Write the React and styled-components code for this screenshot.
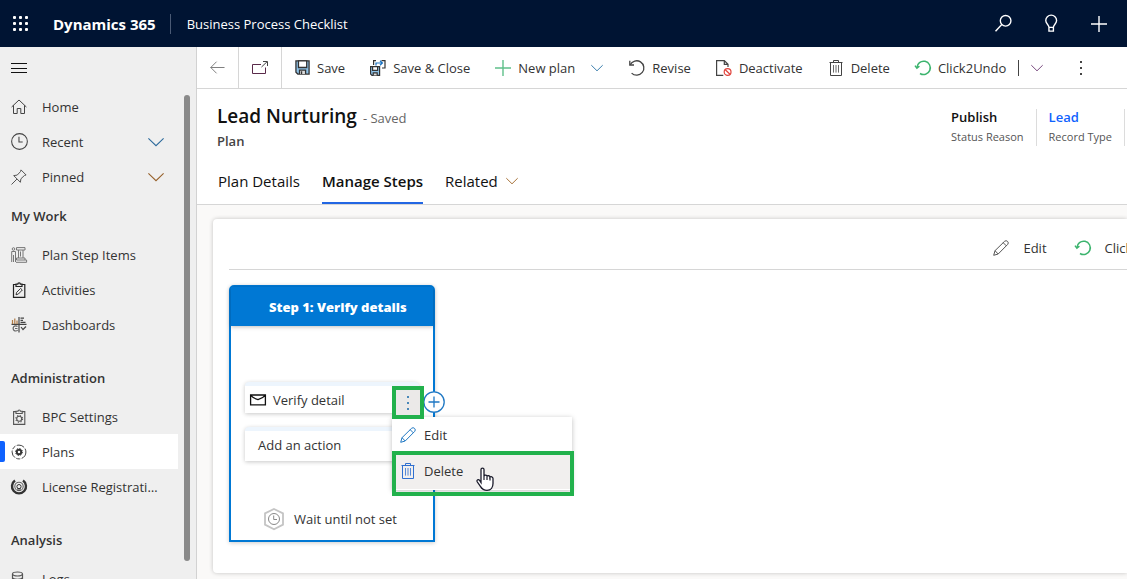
import React from "react";
import styled, { createGlobalStyle } from "styled-components";

const GlobalStyle = createGlobalStyle`
  *, *::before, *::after { box-sizing: border-box; }
  body {
    margin: 0;
    overflow: hidden;
    font-family: "Open Sans", "Noto Sans", sans-serif;
    font-size: 13px;
    line-height: 20px;
    color: #333;
    background: #faf9f8;
  }
  button { font: inherit; color: inherit; background: none; border: 0; padding: 0; cursor: pointer; }
  a { color: inherit; text-decoration: none; }
  h1, h2, p, ul, dl, dd, dt { margin: 0; padding: 0; font: inherit; }
  ul { list-style: none; }
`;

/* ---------- icons ---------- */

const Svg = styled.svg`
  display: block;
  flex: none;
  fill: none;
  overflow: visible;
`;

const Icon = ({ size = 16, color = "#333", children, box = 16, weight = 1 }) => (
  <Svg width={size} height={size} viewBox={`0 0 ${box} ${box}`} stroke={color} strokeWidth={weight} aria-hidden="true">
    {children}
  </Svg>
);

const WaffleIcon = () => (
  <Icon color="none">
    {[0, 6, 12].map((y) =>
      [0, 6, 12].map((x) => <rect key={`${x}-${y}`} x={x} y={y} width="3" height="3" rx="1" fill="#fff" />)
    )}
  </Icon>
);
const SearchIcon = () => (
  <Icon size={17} color="#fff" weight="1.3">
    <circle cx="10" cy="5.5" r="5" />
    <path d="M6.4 9 L0.5 15.3" />
  </Icon>
);
const BulbIcon = () => (
  <Icon size={17} color="#fff" weight="1.3">
    <path d="M5.6 11.6 C5.6 9 2.6 8.2 2.6 5.2 a5.1 5.1 0 0 1 10.2 0 C12.8 8.2 9.8 9 9.8 11.6 Z M5.6 11.6 V15.2 H9.8 V11.6" />
  </Icon>
);
const PlusIcon = ({ color = "#fff", weight = 1.4 }) => (
  <Icon color={color} weight={weight}>
    <path d="M8 0 V16 M0 8 H16" />
  </Icon>
);
const MenuIcon = () => (
  <Icon color="#111">
    <path d="M0 3.5 H16 M0 8.5 H16 M0 12.5 H16" />
  </Icon>
);
const BackIcon = () => (
  <Icon size={15} color="#777">
    <path d="M0.7 8 H15.5 M7 1.8 L0.8 8 L7 14.2" />
  </Icon>
);
const PopoutIcon = () => (
  <Icon color="#444">
    <path d="M9.5 7 L15 1.8 M11 1.5 H15.5 V6" />
    <path d="M9 4.5 H0.5 V13.5 H13.5 V7.5" stroke="#5a2a4a" />
  </Icon>
);
const SaveIcon = () => (
  <Icon size={15} color="#333" weight="1.4">
    <path d="M1 1 H15 V15 H3 L1 13 Z" fill="#8fc4ea" />
    <path d="M3.7 1 H12.5 V8 H3.7 Z" fill="#fff" />
    <path d="M4.8 15 V10.7 H11.3 V15" fill="#ddd" />
    <path d="M7 12 V15" />
  </Icon>
);
const SaveCloseIcon = () => (
  <Icon color="#333" weight="1.2">
    <path d="M0.6 6.6 H9.6 V15.4 H2 L0.6 14 Z" fill="#8fc4ea" />
    <path d="M2.6 6.6 H7.6 V10.4 H2.6 Z" fill="#fff" />
    <path d="M3.2 15.4 V12.8 H7.2 V15.4" fill="#ddd" />
    <path d="M3.6 5 V0.6 H6 M11.5 0.6 H15 V8 H12" />
    <path d="M6 5.6 V3 H12 M10 0.8 L12.4 3 L10 5.2" stroke="#1670c0" />
  </Icon>
);
const ChevronIcon = ({ size = 12, color = "#777" }) => (
  <Icon size={size} color={color} box={12} weight={size > 14 ? 0.8 : 1}>
    <path d="M0.3 3.2 L6 8.8 L11.7 3.2" />
  </Icon>
);
const UndoIcon = () => (
  <Icon color="#444" weight="1.3">
    <path d="M1.2 4.8 A7.2 7.2 0 1 1 2.6 13.1" />
    <path d="M0.8 0.8 V5 H5" />
  </Icon>
);
const GreenUndoIcon = () => (
  <Icon color="#3cb46e" weight="1.5">
    <path d="M1.9 7.6 A6.7 6.7 0 1 1 5 13.5" />
    <path d="M0 5.6 L1.9 8.2 L4.4 6.2" />
  </Icon>
);
const DeactivateIcon = () => (
  <Icon color="#444" weight="1.2">
    <path d="M7.3 15.4 H0.6 V0.6 H8.3 L12 4.3 V7 M8.3 0.6 V4.4 H12" />
    <circle cx="11.6" cy="12" r="3.4" stroke="#e0433c" />
    <path d="M9.3 9.7 L14 14.3" stroke="#e0433c" />
  </Icon>
);
const TrashIcon = ({ color = "#444" }) => (
  <Icon color={color}>
    <path d="M1.5 2.5 H14.5 M5.5 2.5 V0.5 H10.5 V2.5 M2.5 2.5 V15.5 H13.5 V2.5" />
    <path d="M5.5 5 V12.6 M8 5 V12.6 M10.5 5 V12.6" strokeWidth="0.8" />
  </Icon>
);
const PencilIcon = ({ color = "#555", size = 16 }) => (
  <Icon color={color} size={size}>
    <path d="M0.7 15.3 L2 10.7 L11.6 1.3 a2.2 2.2 0 0 1 3.1 3.1 L5.2 14 Z M2 10.7 L5.2 14 M10.2 2.7 L13.3 5.8" />
  </Icon>
);
const DotsIcon = ({ color = "#444" }) => (
  <Icon color="none">
    {[1, 7, 13].map((y) => (
      <rect key={y} x="7" y={y} width="2" height="2" fill={color} />
    ))}
  </Icon>
);
const HomeIcon = () => (
  <Icon color="#444">
    <path d="M0.6 8 L8 1 L15.4 8 M2.5 6.3 V14.5 H6.2 V9.5 H9.8 V14.5 H13.5 V6.3" />
  </Icon>
);
const ClockIcon = () => (
  <Icon size={17} color="#444">
    <circle cx="8" cy="8" r="7.4" />
    <path d="M7.5 3.5 V8.5 H11" />
  </Icon>
);
const PinIcon = () => (
  <Icon color="#555">
    <path d="M10 0.9 L15.1 6 L13.4 6.5 L9.9 9.8 L9.4 13.3 L2.7 6.6 L6.2 6.1 L9.5 2.6 Z M6 10 L0.5 15.5" />
  </Icon>
);
const StepItemsIcon = () => (
  <Icon color="#777">
    <circle cx="2.5" cy="2" r="1.3" />
    <path d="M0.7 8 V4.5 H4.5 V15 M2.5 8 V15 M0.7 8 V15 M5.5 0.6 H14 V3 H5.5 Z M7.5 3 V11 M12 3 V11 M9.5 4.5 V9.5 M5.5 11 H14 V13 H5.5 Z M5 15.3 H15.6 V13 H14" />
  </Icon>
);
const ActivitiesIcon = () => (
  <Icon color="#222" weight="1.2">
    <path d="M5 2.5 H2.5 V15.4 H13.8 V2.5 H11 M5 4.5 V2.2 H6.8 a1.3 1.3 0 0 1 2.6 0 H11 V4.5 Z" />
    <path d="M5 12.8 L5.6 10.4 L9.6 6.4 L11.3 8 L7.4 12 Z" strokeWidth="0.9" />
  </Icon>
);
const DashboardsIcon = () => (
  <Icon color="#444" weight="1.2">
    <path d="M0.5 7.4 H15.5 M8 0 V15.5" />
    <path d="M1.5 7 V3 M3.8 7 V1.5 M6 7 V3.5" stroke="#b07a44" />
    <path d="M9.5 1.2 H13 M9.5 3.3 H12 M9.5 5.4 H14.5 M10 10 L12 12.5 L15 9.5" />
    <path d="M6.5 9.5 A2.6 2.6 0 1 0 6.8 13 M4 11.5 H6.5" stroke="#666" />
  </Icon>
);
const BpcIcon = () => (
  <Icon color="#555" weight="1.1">
    <path d="M5 2.6 H2.6 V15.4 H13.8 V2.6 H11.2 M5 4.5 V2.2 H7 a1.2 1.2 0 0 1 2.4 0 H11.2 V4.5 Z" />
    <circle cx="8.2" cy="9.8" r="2.5" />
    <circle cx="8.2" cy="9.8" r="3.4" strokeDasharray="1.2 1.5" />
  </Icon>
);
const PlansIcon = () => (
  <Icon color="#444">
    <circle cx="8" cy="8" r="6.9" strokeDasharray="8 1.5 4 1.5" />
    <circle cx="8" cy="8" r="2.2" stroke="#333" strokeWidth="1.9" />
    <circle cx="8" cy="8" r="3.5" stroke="#333" strokeDasharray="1.3 1.45" />
  </Icon>
);
const LicenseIcon = () => (
  <Icon color="#333">
    <path d="M4 1.6 A7 7 0 1 0 12 1.6" strokeWidth="2.4" />
    <circle cx="8" cy="7.4" r="4.2" stroke="#666" strokeWidth="1.1" />
    <circle cx="8" cy="7.6" r="2.1" />
    <path d="M7 9 V11.6 M9 9 V11.6" />
  </Icon>
);
const LogsIcon = () => (
  <Icon color="#555" weight="1.2">
    <ellipse cx="6.5" cy="3" rx="5" ry="2" />
    <path d="M1.5 3 V13 C1.5 16 11.5 16 11.5 13 V3 M1.5 6.3 C1.5 9 11.5 9 11.5 6.3 M1.5 9.6 C1.5 12.3 11.5 12.3 11.5 9.6" />
  </Icon>
);
const MailIcon = () => (
  <Icon color="#111" weight="1.3">
    <path d="M0.6 3 H15.4 V12.9 H0.6 Z M0.8 3.3 Q3 6 8 7.6 Q13 6 15.2 3.3" />
  </Icon>
);
const WaitIcon = () => (
  <Icon size={22} box={22} color="#c4c4c4" weight="1.8">
    <path d="M11 1 L20 5.4 V16.6 L11 21.2 L2 16.6 V5.4 Z" />
    <circle cx="11" cy="11" r="5.5" stroke="#888" strokeWidth="1" />
    <path d="M10.7 7.5 V11.5 H14" stroke="#888" strokeWidth="1" />
  </Icon>
);
const AddCircleIcon = () => (
  <Icon size={22} box={22} color="#1f78c4" weight="1.3">
    <circle cx="11" cy="11" r="10.2" fill="#fff" />
    <path d="M5.5 11 H16.5 M11 5.5 V16.5" />
  </Icon>
);

/* ---------- shell ---------- */

const Page = styled.div`
  display: flex;
  flex-direction: column;
  height: 100vh;
`;
const TopBar = styled.header`
  display: flex;
  align-items: center;
  flex: none;
  height: 47px;
  padding: 0 20px 0 13px;
  color: #fff;
  background: #001433;
`;
const Brand = styled.a`
  margin-left: 24px;
  font-size: 15px;
  font-weight: 700;
`;
const AppName = styled.a`
  margin-left: 14px;
  padding-left: 16px;
  border-left: 1px solid #4a5a75;
`;
const TopActions = styled.div`
  display: flex;
  align-items: center;
  gap: 31px;
  margin-left: auto;
`;
const Body = styled.div`
  display: flex;
  flex: 1;
  min-height: 0;
`;

/* ---------- sidebar ---------- */

const Sidebar = styled.aside`
  display: flex;
  flex-direction: column;
  flex: none;
  width: 197px;
  background: #efefef;
  border-right: 1px solid #d2d2d2;
`;
const MenuButton = styled.button`
  display: flex;
  align-items: center;
  flex: none;
  height: 42px;
  padding-left: 11px;
`;
const SidebarScroll = styled.div`
  display: flex;
  flex: 1;
  min-height: 0;
`;
const Nav = styled.nav`
  width: 178px;
  overflow: hidden;
`;
const ScrollThumb = styled.div`
  width: 6px;
  margin: 6px 0 18px 6px;
  border-radius: 3px;
  background: #8a8a8a;
`;
const NavTitle = styled.h2`
  padding: 0 11px;
  margin-top: ${(p) => (p.$spaced ? "15px" : "1px")};
  font-weight: 600;
  line-height: 42px;
`;
const NavLink = styled.a`
  position: relative;
  display: grid;
  grid-template-columns: 31px 1fr auto;
  align-items: center;
  height: 35px;
  padding: 0 14px 0 11px;
  background: ${(p) => (p.$active ? "#fff" : "transparent")};

  &::before {
    content: "";
    display: ${(p) => (p.$active ? "block" : "none")};
    position: absolute;
    left: 0;
    top: 7px;
    width: 5px;
    height: 21px;
    border-radius: 0 2px 2px 0;
    background: #0f62fe;
  }
`;
const NavLabel = styled.span`
  padding-right: 4px;
  overflow: hidden;
  white-space: nowrap;
  text-overflow: ellipsis;
`;

/* ---------- record ---------- */

const Main = styled.main`
  display: flex;
  flex-direction: column;
  flex: 1;
  min-width: 0;
`;
const CommandBar = styled.div`
  display: flex;
  flex: none;
  height: 42px;
  background: #fff;
  border-bottom: 1px solid #d6d6d6;
`;
const SquareCommand = styled.button`
  display: flex;
  align-items: center;
  justify-content: center;
  flex: none;
  width: ${(p) => p.$width || 42}px;
  border-right: 1px solid #d6d6d6;
`;
const Command = styled.button`
  display: flex;
  align-items: center;
  flex: none;
  gap: 7px;
  padding: 0 12px 0 13px;
  white-space: nowrap;
`;
const CommandDrop = styled.button`
  display: flex;
  align-items: center;
  flex: none;
  padding: 0 13px 0 4px;
`;
const SplitLine = styled.span`
  align-self: center;
  width: 1px;
  height: 16px;
  margin-right: 8px;
  background: #444;
`;
const OverflowButton = styled.button`
  display: flex;
  align-items: center;
  padding: 0 17px;
`;
const RecordHeader = styled.section`
  flex: none;
  padding: 15px 2px 0 20px;
  background: #fff;
  border-bottom: 1px solid #d6d6d6;
`;
const HeaderRow = styled.div`
  display: flex;
  justify-content: space-between;
  align-items: flex-start;
`;
const TitleLine = styled.div`
  display: flex;
  align-items: baseline;
  gap: 6px;
  line-height: 24px;
`;
const Title = styled.h1`
  font-size: 19px;
  font-weight: 600;
  color: #111;
`;
const SavedState = styled.span`
  color: #666;
`;
const EntityName = styled.p`
  margin-top: 1px;
  font-weight: 600;
  color: #444;
`;
const Facts = styled.dl`
  display: flex;
  padding-top: 5px;
`;
const Fact = styled.div`
  display: flex;
  flex-direction: column;
  padding: 0 12px;
  border-right: 1px solid #dcdcdc;
  line-height: 19px;
`;
const FactValue = styled.dd`
  margin-top: -1px;
  font-weight: 600;
  color: ${(p) => (p.$link ? "#0f62fe" : "#111")};
`;
const FactLabel = styled.dt`
  font-size: 11px;
  color: #555;
`;
const Tabs = styled.div`
  display: flex;
  gap: 22px;
  height: 46px;
  margin-top: 7px;
  padding-left: 1px;
`;
const Tab = styled.button`
  display: flex;
  align-items: center;
  gap: 8px;
  padding-top: 1px;
  font-size: 15px;
  font-weight: ${(p) => (p.$active ? 600 : 400)};
  color: #111;
  border-bottom: 2px solid ${(p) => (p.$active ? "#2266e3" : "transparent")};
`;

/* ---------- steps canvas ---------- */

const Content = styled.div`
  flex: 1;
  min-height: 0;
  padding: 14px 0 6px 16px;
`;
const Panel = styled.section`
  height: 100%;
  padding-left: 16px;
  overflow: hidden;
  background: #fff;
  border-radius: 4px 0 0 4px;
  box-shadow: 0 0 4px rgba(0, 0, 0, 0.22);
`;
const PanelTools = styled.div`
  display: flex;
  justify-content: flex-end;
  height: 51px;
  padding-top: 7px;
  margin-right: -46px;
  border-bottom: 1px solid #d6d6d6;
`;
const PanelTool = styled.button`
  display: flex;
  align-items: center;
  gap: 14px;
  margin-left: 28px;
  white-space: nowrap;
`;
const Step = styled.article`
  width: 206px;
  margin-top: 15px;
  border: 2px solid #0078d4;
  border-radius: 5px 5px 0 0;
  box-shadow: 0 1px 4px rgba(0, 0, 0, 0.2);
`;
const StepTitle = styled.h2`
  height: 39px;
  padding: 0 28px 0 38px;
  font-weight: 800;
  line-height: 40px;
  color: #fff;
  white-space: nowrap;
  background: #0078d4;
  box-shadow: 0 1px 4px rgba(0, 0, 0, 0.25);
`;
const StepBody = styled.div`
  display: flex;
  flex-direction: column;
  gap: 14px;
  padding: 56px 14px 10px;
`;
const ActionCard = styled.div`
  position: relative;
  display: flex;
  align-items: center;
  gap: 7px;
  height: 31px;
  padding: 0 5px;
  background: #fff;
  border-top: 4px solid #edf5fd;
  border-radius: 4px 4px 0 0;
  box-shadow: 0 1px 4px rgba(0, 0, 0, 0.22);
`;
const AddAction = styled.button`
  height: 34px;
  padding: 0 13px 2px;
  text-align: left;
  background: #fff;
  border-top: 4px solid #edf5fd;
  border-radius: 4px 4px 0 0;
  box-shadow: 0 1px 4px rgba(0, 0, 0, 0.22);
`;
const WaitRow = styled.button`
  display: flex;
  align-items: center;
  gap: 9px;
  margin: 33px 0 0 18px;
`;
const MoreButton = styled.button`
  position: absolute;
  left: 147px;
  top: 0;
  display: flex;
  align-items: center;
  justify-content: center;
  width: 32px;
  height: 33px;
  background: #ebe9e8;
  border: 4px solid #22b14c;
  z-index: 2;
`;
const AddStepButton = styled.button`
  position: absolute;
  left: 178px;
  top: 5px;
  z-index: 1;
`;
const ContextMenu = styled.ul`
  position: absolute;
  left: 147px;
  top: 31px;
  width: 180px;
  height: 73px;
  background: #fff;
  box-shadow: 0 1px 5px rgba(0, 0, 0, 0.25);
  z-index: 1;
`;
const MenuItem = styled.button`
  display: flex;
  align-items: center;
  gap: 8px;
  width: 100%;
  height: 36px;
  padding: 0 8px;
  background: ${(p) => (p.$hover ? "#f1efee" : "transparent")};
`;
const Highlight = styled.li`
  position: absolute;
  left: 0;
  top: 34px;
  width: 182px;
  height: 45px;
  border: 4px solid #22b14c;
  pointer-events: none;
`;
const Pointer = styled.svg`
  position: absolute;
  left: 84px;
  top: 50px;
`;

const mainLinks = [
  { label: "Home", icon: <HomeIcon /> },
  { label: "Recent", icon: <ClockIcon />, arrow: "#2c6a9c" },
  { label: "Pinned", icon: <PinIcon />, arrow: "#96602a" },
];
const groups = [
  {
    title: "My Work",
    links: [
      { label: "Plan Step Items", icon: <StepItemsIcon /> },
      { label: "Activities", icon: <ActivitiesIcon /> },
      { label: "Dashboards", icon: <DashboardsIcon /> },
    ],
  },
  {
    title: "Administration",
    links: [
      { label: "BPC Settings", icon: <BpcIcon /> },
      { label: "Plans", icon: <PlansIcon />, active: true },
      { label: "License Registration", icon: <LicenseIcon /> },
    ],
  },
  { title: "Analysis", links: [{ label: "Logs", icon: <LogsIcon /> }] },
];

const NavItem = ({ label, icon, arrow, active }) => (
  <li>
    <NavLink href="#" $active={active} aria-current={active ? "page" : undefined}>
      {icon}
      <NavLabel>{label}</NavLabel>
      {arrow && <ChevronIcon size={16} color={arrow} />}
    </NavLink>
  </li>
);

export default function App() {
  return (
    <Page>
      <GlobalStyle />
      <TopBar>
        <button aria-label="App launcher"><WaffleIcon /></button>
        <Brand href="#">Dynamics 365</Brand>
        <AppName href="#">Business Process Checklist</AppName>
        <TopActions>
          <button aria-label="Search"><SearchIcon /></button>
          <button aria-label="Assistant"><BulbIcon /></button>
          <button aria-label="New"><PlusIcon /></button>
        </TopActions>
      </TopBar>
      <Body>
        <Sidebar>
          <MenuButton aria-label="Toggle navigation"><MenuIcon /></MenuButton>
          <SidebarScroll>
            <Nav>
              <ul>{mainLinks.map((l) => <NavItem key={l.label} {...l} />)}</ul>
              {groups.map((g, i) => (
                <React.Fragment key={g.title}>
                  <NavTitle $spaced={i > 0}>{g.title}</NavTitle>
                  <ul>{g.links.map((l) => <NavItem key={l.label} {...l} />)}</ul>
                </React.Fragment>
              ))}
            </Nav>
            <ScrollThumb />
          </SidebarScroll>
        </Sidebar>
        <Main>
          <CommandBar>
            <SquareCommand aria-label="Back"><BackIcon /></SquareCommand>
            <SquareCommand aria-label="Open in new window" $width={43}><PopoutIcon /></SquareCommand>
            <Command><SaveIcon />Save</Command>
            <Command><SaveCloseIcon />Save &amp; Close</Command>
            <Command><PlusIcon color="#5fc08a" />New plan</Command>
            <CommandDrop aria-label="More new options"><ChevronIcon color="#3c7fae" /></CommandDrop>
            <Command><UndoIcon />Revise</Command>
            <Command><DeactivateIcon />Deactivate</Command>
            <Command><TrashIcon />Delete</Command>
            <Command><GreenUndoIcon />Click2Undo</Command>
            <SplitLine />
            <CommandDrop aria-label="More undo options"><ChevronIcon color="#7a4a80" /></CommandDrop>
            <OverflowButton aria-label="More commands"><DotsIcon /></OverflowButton>
          </CommandBar>
          <RecordHeader>
            <HeaderRow>
              <div>
                <TitleLine>
                  <Title>Lead Nurturing</Title>
                  <SavedState>- Saved</SavedState>
                </TitleLine>
                <EntityName>Plan</EntityName>
              </div>
              <Facts>
                <Fact>
                  <FactValue>Publish</FactValue>
                  <FactLabel>Status Reason</FactLabel>
                </Fact>
                <Fact>
                  <FactValue $link><a href="#">Lead</a></FactValue>
                  <FactLabel>Record Type</FactLabel>
                </Fact>
              </Facts>
            </HeaderRow>
            <Tabs role="tablist">
              <Tab role="tab">Plan Details</Tab>
              <Tab role="tab" $active aria-selected="true">Manage Steps</Tab>
              <Tab role="tab">Related <ChevronIcon color="#a8743c" /></Tab>
            </Tabs>
          </RecordHeader>
          <Content>
            <Panel>
              <PanelTools>
                <PanelTool><PencilIcon />Edit</PanelTool>
                <PanelTool><GreenUndoIcon />Click2Undo</PanelTool>
              </PanelTools>
              <Step>
                <StepTitle>Step 1: Verify details</StepTitle>
                <StepBody>
                  <ActionCard>
                    <MailIcon />
                    Verify detail
                    <AddStepButton aria-label="Add step"><AddCircleIcon /></AddStepButton>
                    <ContextMenu>
                      <li><MenuItem><PencilIcon color="#1f78c4" />Edit</MenuItem></li>
                      <li><MenuItem $hover><TrashIcon color="#2f6fd0" />Delete</MenuItem></li>
                      <Highlight aria-hidden="true" />
                      <Pointer width="18" height="25" viewBox="0 0 18 25" aria-hidden="true">
                        <path
                          d="M5 15.5 V2.6 C5 0.6 8 0.6 8 2.6 V9 C8.3 7.6 11 7.8 11 9.4 C11.5 8.2 14 8.6 14 10.2 C14.8 9.2 17 9.8 17 11.6 V16.5 C17 20 15 23.4 11 23.4 C7.4 23.4 5.6 21.4 4.4 19.4 L1.2 14.8 C0.4 12.8 2.4 11.8 3.6 13.4 Z"
                          fill="#fff"
                          stroke="#1a1a2a"
                          strokeWidth="1.3"
                        />
                        <path d="M8 9 V13 M11 9.6 V13 M14 10.4 V13.4" stroke="#1a1a2a" strokeWidth="1.2" />
                      </Pointer>
                    </ContextMenu>
                    <MoreButton aria-label="Action options"><DotsIcon color="#4a87b8" /></MoreButton>
                  </ActionCard>
                  <AddAction>Add an action</AddAction>
                  <WaitRow><WaitIcon />Wait until not set</WaitRow>
                </StepBody>
              </Step>
            </Panel>
          </Content>
        </Main>
      </Body>
    </Page>
  );
}
